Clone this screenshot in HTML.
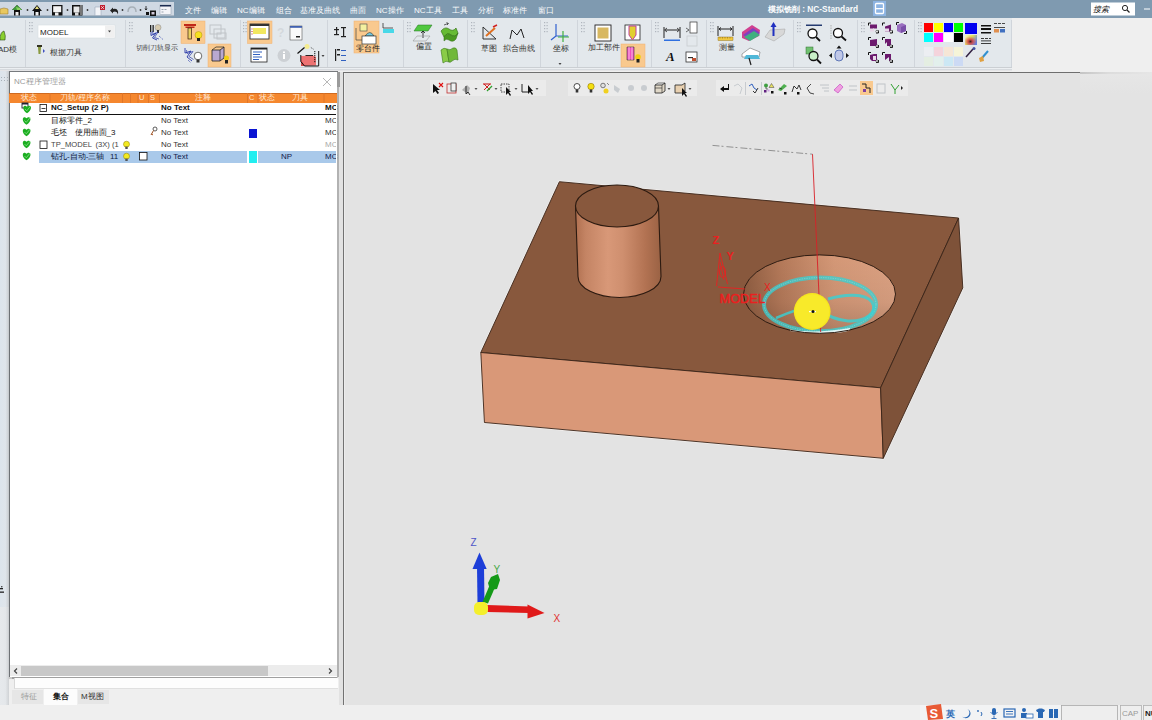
<!DOCTYPE html>
<html><head><meta charset="utf-8">
<style>
*{margin:0;padding:0;box-sizing:border-box}
html,body{width:1152px;height:720px;overflow:hidden;background:#efefef;font-family:"Liberation Sans",sans-serif;}
.a{position:absolute}
#title{left:0;top:0;width:1152px;height:18px;background:#7f9ab0}
#qat{left:0;top:2px;width:174px;height:14px;background:#cfd8e3;border-bottom:1px solid #a9b6c4}
.menu{top:4.8px;font-size:8px;color:#fbfcfd;line-height:12px;white-space:nowrap}
#ribbon{left:0;top:18px;width:1152px;height:49px;background:#e3e8ec}
.sep{top:20px;width:1px;height:46px;background:#d3d7dc}
.grip{width:4px;height:9px;background-image:radial-gradient(circle,#b4bac2 0.8px,transparent 1px);background-size:2.5px 3px}
#panel{left:8.5px;top:71px;width:329px;height:606px;background:#fff;border-left:1.5px solid #6d7175;border-top:1px solid #777a7e;box-shadow:0 1.5px 1px #a0a0a0}
#vp{left:343px;top:72px;width:809px;height:633px;background:#e3e3e3;border-left:1px solid #727272;border-top:1.5px solid #6e6e6e;box-shadow:inset 1px 0 0 #ececec}
#status{left:0;top:705px;width:1152px;height:15px;background:#efefef}
.t{position:absolute;font-size:8px;line-height:10px;white-space:nowrap;color:#222}
</style></head><body>
<!-- title bar -->
<div class="a" id="title"></div>
<div class="a" id="qat"></div>
<div class="a menu" style="left:185px">文件</div>
<div class="a menu" style="left:211px">编辑</div>
<div class="a menu" style="left:237px">NC编辑</div>
<div class="a menu" style="left:276px">组合</div>
<div class="a menu" style="left:300px">基准及曲线</div>
<div class="a menu" style="left:350px">曲面</div>
<div class="a menu" style="left:376px">NC操作</div>
<div class="a menu" style="left:414px">NC工具</div>
<div class="a menu" style="left:452px">工具</div>
<div class="a menu" style="left:478px">分析</div>
<div class="a menu" style="left:503px">标准件</div>
<div class="a menu" style="left:538px">窗口</div>
<div class="a menu" style="left:768px;top:3px;font-weight:bold;font-size:8.3px">模拟铣削 : NC-Standard</div>

<!-- ribbon -->
<div class="a" id="ribbon"></div>
<div class="a" style="left:0;top:67px;width:1152px;height:1px;background:#cbcfd3"></div><div class="a" style="left:0;top:68px;width:1152px;height:1px;background:#eceff2"></div><div class="a" style="left:0;top:69px;width:1152px;height:1px;background:#d6dade"></div><div class="a" style="left:0;top:70px;width:1152px;height:1px;background:#e4e4e6"></div><div class="a" style="left:1012px;top:18px;width:140px;height:53px;background:#efefef"></div>


<!-- ribbon svg -->
<svg class="a" style="left:0;top:0" width="1152" height="71" viewBox="0 0 1152 71" font-family="Liberation Sans">
<!-- QAT icons -->
<path d="M0,9 L4,8 L8,9 L8,14 L0,14Z" fill="#e8c860" stroke="#a08030" stroke-width="0.6"/>
<path d="M12,10 L17,5 L22,10 L20,10 L20,15.5 L14,15.5 L14,10Z" fill="#111"/>
<path d="M12,10 L17,5 L22,10Z" fill="#3d9a3a"/><path d="M16,7 L20,8 L21,10 L17,10Z" fill="#88d060"/>
<rect x="15.5" y="12" width="3" height="3.5" fill="#eee"/>
<path d="M32,11 L37,5 L42,11 L40,11 L40,15.5 L34,15.5 L34,11Z" fill="#111"/>
<path d="M35,9 L37,6 L39,9Z" fill="#e8e080"/>
<rect x="35.5" y="12" width="3" height="3.5" fill="#eee"/>
<rect x="52" y="5" width="10.5" height="10.5" fill="#111"/><rect x="53.2" y="6.2" width="8" height="6" fill="#f4f4f4"/><rect x="55" y="12.5" width="3.5" height="3" fill="#eee"/>
<rect x="72" y="5" width="10.5" height="10.5" fill="#111"/><rect x="73.5" y="6.5" width="6" height="6" fill="#e8e8e8"/><rect x="80.5" y="5" width="1" height="10" fill="#ddd"/><rect x="75" y="12.5" width="3.5" height="3" fill="#ddd"/>
<g fill="#333"><circle cx="27.5" cy="10" r="0.9"/><circle cx="47.5" cy="10" r="0.9"/><circle cx="67.5" cy="10" r="0.9"/><circle cx="87.5" cy="10" r="0.9"/><circle cx="122.5" cy="10" r="0.9"/><circle cx="140.5" cy="10" r="0.9"/></g>
<path d="M95,7 L101,7 L101,15.5 L95,15.5Z" fill="#f2f4f8" stroke="#9aa8b8" stroke-width="0.6"/>
<rect x="100" y="5" width="5" height="5" fill="#c02030"/><path d="M101,6 L104,9 M104,6 L101,9" stroke="#fff" stroke-width="0.6"/>
<path d="M110,10.5 L113,7.5 L113,9 Q119,8 118,14.5 Q117,10.5 113,12 L113,13.5Z" fill="#222"/>
<path d="M128,12 Q128,7 132,7 Q136,7 136,12" fill="none" stroke="#a8b0b8" stroke-width="1.5"/>
<path d="M146,6 L146,10 M145,8.5 L146,10 L147,8.5" stroke="#111" stroke-width="0.8" fill="none"/>
<rect x="146" y="12" width="3" height="3" fill="#111"/><rect x="150" y="10.5" width="6" height="5.5" fill="#111"/><rect x="151.5" y="12" width="3" height="2.5" fill="#cfc8d8"/>
<rect x="160" y="5" width="11" height="9.5" fill="#f4f4f8" stroke="#8a98a8" stroke-width="0.5"/><rect x="160" y="5" width="11" height="1.5" fill="#1a2a50"/>
<g fill="#9aa4b0"><rect x="161.5" y="9" width="2" height="1"/><rect x="164.5" y="9" width="2" height="1"/><rect x="161.5" y="11.5" width="2" height="1"/></g>

<!-- ribbon separators -->
<g fill="#d0d5db">
<rect x="25" y="20" width="1" height="47"/><rect x="125" y="20" width="1" height="47"/><rect x="240" y="20" width="1" height="47"/>
<rect x="327" y="20" width="1" height="47"/><rect x="403" y="20" width="1" height="47"/><rect x="467" y="20" width="1" height="47"/>
<rect x="540" y="20" width="1" height="47"/><rect x="577" y="20" width="1" height="47"/><rect x="651" y="20" width="1" height="47"/>
<rect x="706" y="20" width="1" height="47"/><rect x="793" y="20" width="1" height="47"/><rect x="857" y="20" width="1" height="47"/>
<rect x="914" y="20" width="1" height="47"/><rect x="1011" y="20" width="1" height="47"/>
</g>

<!-- grips -->
<g fill="#b0b6be">
<rect x="29" y="22" width="1.2" height="1.2"/><rect x="31.5" y="22" width="1.2" height="1.2"/><rect x="29" y="25" width="1.2" height="1.2"/><rect x="31.5" y="25" width="1.2" height="1.2"/><rect x="29" y="28" width="1.2" height="1.2"/><rect x="31.5" y="28" width="1.2" height="1.2"/><rect x="29" y="31" width="1.2" height="1.2"/><rect x="31.5" y="31" width="1.2" height="1.2"/><rect x="129" y="22" width="1.2" height="1.2"/><rect x="131.5" y="22" width="1.2" height="1.2"/><rect x="129" y="25" width="1.2" height="1.2"/><rect x="131.5" y="25" width="1.2" height="1.2"/><rect x="129" y="28" width="1.2" height="1.2"/><rect x="131.5" y="28" width="1.2" height="1.2"/><rect x="129" y="31" width="1.2" height="1.2"/><rect x="131.5" y="31" width="1.2" height="1.2"/><rect x="243" y="22" width="1.2" height="1.2"/><rect x="245.5" y="22" width="1.2" height="1.2"/><rect x="243" y="25" width="1.2" height="1.2"/><rect x="245.5" y="25" width="1.2" height="1.2"/><rect x="243" y="28" width="1.2" height="1.2"/><rect x="245.5" y="28" width="1.2" height="1.2"/><rect x="243" y="31" width="1.2" height="1.2"/><rect x="245.5" y="31" width="1.2" height="1.2"/><rect x="407" y="22" width="1.2" height="1.2"/><rect x="409.5" y="22" width="1.2" height="1.2"/><rect x="407" y="25" width="1.2" height="1.2"/><rect x="409.5" y="25" width="1.2" height="1.2"/><rect x="407" y="28" width="1.2" height="1.2"/><rect x="409.5" y="28" width="1.2" height="1.2"/><rect x="407" y="31" width="1.2" height="1.2"/><rect x="409.5" y="31" width="1.2" height="1.2"/><rect x="471" y="22" width="1.2" height="1.2"/><rect x="473.5" y="22" width="1.2" height="1.2"/><rect x="471" y="25" width="1.2" height="1.2"/><rect x="473.5" y="25" width="1.2" height="1.2"/><rect x="471" y="28" width="1.2" height="1.2"/><rect x="473.5" y="28" width="1.2" height="1.2"/><rect x="471" y="31" width="1.2" height="1.2"/><rect x="473.5" y="31" width="1.2" height="1.2"/><rect x="544" y="22" width="1.2" height="1.2"/><rect x="546.5" y="22" width="1.2" height="1.2"/><rect x="544" y="25" width="1.2" height="1.2"/><rect x="546.5" y="25" width="1.2" height="1.2"/><rect x="544" y="28" width="1.2" height="1.2"/><rect x="546.5" y="28" width="1.2" height="1.2"/><rect x="544" y="31" width="1.2" height="1.2"/><rect x="546.5" y="31" width="1.2" height="1.2"/><rect x="581" y="22" width="1.2" height="1.2"/><rect x="583.5" y="22" width="1.2" height="1.2"/><rect x="581" y="25" width="1.2" height="1.2"/><rect x="583.5" y="25" width="1.2" height="1.2"/><rect x="581" y="28" width="1.2" height="1.2"/><rect x="583.5" y="28" width="1.2" height="1.2"/><rect x="581" y="31" width="1.2" height="1.2"/><rect x="583.5" y="31" width="1.2" height="1.2"/><rect x="655" y="22" width="1.2" height="1.2"/><rect x="657.5" y="22" width="1.2" height="1.2"/><rect x="655" y="25" width="1.2" height="1.2"/><rect x="657.5" y="25" width="1.2" height="1.2"/><rect x="655" y="28" width="1.2" height="1.2"/><rect x="657.5" y="28" width="1.2" height="1.2"/><rect x="655" y="31" width="1.2" height="1.2"/><rect x="657.5" y="31" width="1.2" height="1.2"/><rect x="710" y="22" width="1.2" height="1.2"/><rect x="712.5" y="22" width="1.2" height="1.2"/><rect x="710" y="25" width="1.2" height="1.2"/><rect x="712.5" y="25" width="1.2" height="1.2"/><rect x="710" y="28" width="1.2" height="1.2"/><rect x="712.5" y="28" width="1.2" height="1.2"/><rect x="710" y="31" width="1.2" height="1.2"/><rect x="712.5" y="31" width="1.2" height="1.2"/><rect x="797" y="22" width="1.2" height="1.2"/><rect x="799.5" y="22" width="1.2" height="1.2"/><rect x="797" y="25" width="1.2" height="1.2"/><rect x="799.5" y="25" width="1.2" height="1.2"/><rect x="797" y="28" width="1.2" height="1.2"/><rect x="799.5" y="28" width="1.2" height="1.2"/><rect x="797" y="31" width="1.2" height="1.2"/><rect x="799.5" y="31" width="1.2" height="1.2"/><rect x="861" y="22" width="1.2" height="1.2"/><rect x="863.5" y="22" width="1.2" height="1.2"/><rect x="861" y="25" width="1.2" height="1.2"/><rect x="863.5" y="25" width="1.2" height="1.2"/><rect x="861" y="28" width="1.2" height="1.2"/><rect x="863.5" y="28" width="1.2" height="1.2"/><rect x="861" y="31" width="1.2" height="1.2"/><rect x="863.5" y="31" width="1.2" height="1.2"/><rect x="918" y="22" width="1.2" height="1.2"/><rect x="920.5" y="22" width="1.2" height="1.2"/><rect x="918" y="25" width="1.2" height="1.2"/><rect x="920.5" y="25" width="1.2" height="1.2"/><rect x="918" y="28" width="1.2" height="1.2"/><rect x="920.5" y="28" width="1.2" height="1.2"/><rect x="918" y="31" width="1.2" height="1.2"/><rect x="920.5" y="31" width="1.2" height="1.2"/>
</g>
<!-- orange highlight boxes -->
<g fill="#f9c98e" stroke="#f0b070" stroke-width="0.5">
<rect x="181" y="21" width="24" height="22.5"/>
<rect x="208" y="44" width="23" height="23"/>
<rect x="247.5" y="21" width="24.5" height="22.5"/>
<rect x="354" y="21" width="25" height="32"/>
<rect x="621" y="44" width="24" height="23"/>
</g>
<!-- group0 -->
<path d="M0,40 Q0,32 4,31 Q6,36 5,40Z" fill="#8ad030" stroke="#2a4a10" stroke-width="0.6"/>
<text x="-2" y="52" font-size="8" fill="#333">AD模</text>
<!-- group1 -->
<rect x="38" y="25" width="77" height="13" fill="#fff" stroke="#d8dce0" stroke-width="0.6"/>
<rect x="105" y="25.5" width="9.5" height="12" fill="#f0f0f0"/>
<path d="M108,30.5 L111,30.5 L109.5,32.5Z" fill="#444"/>
<text x="40" y="35" font-size="8" fill="#222">MODEL</text>
<rect x="37" y="45" width="5" height="2" fill="#332"/><path d="M38,47 L41,47 L40.5,54 L38.5,54Z" fill="#8a9a40"/><path d="M43,49 L45,51 L43,53Z" fill="#4050c0"/>
<text x="50" y="54.5" font-size="8" fill="#333">根据刀具</text>
<!-- group2 -->
<rect x="150" y="25" width="1.3" height="7" fill="#222"/><rect x="152.5" y="25" width="1.3" height="7" fill="#222"/>
<circle cx="158" cy="27.5" r="3" fill="#d8ccb0" stroke="#888" stroke-width="0.5"/><rect x="157" y="30" width="2" height="3" fill="#333"/>
<path d="M151,32 L151,35.5 L156,33 L152.5,38 L157,40" fill="none" stroke="#2838a8" stroke-width="0.9"/><path d="M152.5,31 L153,34.5 L158,32 L154.5,37.5 L159,39" fill="none" stroke="#2838a8" stroke-width="0.7"/><path d="M159,36 L163,39.5" stroke="#2838a8" stroke-width="0.8" stroke-dasharray="1,1"/>
<text x="135.5" y="49.5" font-size="7.3" fill="#444">切削刀轨显示</text>
<rect x="184" y="24" width="12" height="2" fill="#c02818"/><rect x="185.5" y="26.5" width="9" height="1.5" fill="#c02818"/><rect x="188" y="28" width="3.5" height="11" fill="#e8d060" stroke="#3a1a10" stroke-width="0.7"/>
<circle cx="198.5" cy="35" r="3.5" fill="#f5e020" stroke="#a08000" stroke-width="0.4"/><rect x="197" y="38" width="3" height="3" fill="#222"/>
<g fill="none" stroke="#c0c4c8" stroke-width="1"><rect x="210" y="25" width="11" height="9"/><rect x="214" y="29" width="11" height="9"/><rect x="217" y="33" width="9" height="6"/></g>
<path d="M185,48 L185,53 L191,51 L187,57 L192,61" fill="none" stroke="#2838a8" stroke-width="0.9"/><path d="M186.5,50 L187,53.5 L193,51.5 L189,56.5 L193.5,59.5" fill="none" stroke="#2838a8" stroke-width="0.7"/><path d="M188,60 L191,63" stroke="#2838a8" stroke-width="0.8" stroke-dasharray="1,1"/>
<circle cx="198" cy="56" r="3.8" fill="#fff" stroke="#333" stroke-width="0.7"/><rect x="196.5" y="59.5" width="3" height="3" fill="#333"/>
<path d="M212,50 L220,50 L224,47 L224,58 L220,61 L212,61Z" fill="#b8a8d0" stroke="#222" stroke-width="0.8"/><path d="M212,50 L216,47 L224,47 M220,50 L220,61" fill="none" stroke="#222" stroke-width="0.7"/>
<circle cx="226.5" cy="58" r="2.5" fill="#f0d010"/><rect x="225" y="60" width="3" height="3.5" fill="#222"/>
<!-- group3 -->
<rect x="250" y="24" width="19" height="15" fill="#fff" stroke="#333" stroke-width="0.9"/><rect x="250" y="24" width="19" height="2" fill="#333"/>
<rect x="253" y="28" width="13" height="6" fill="#f2e860"/><g fill="#c02020"><rect x="251.5" y="28.5" width="1" height="1"/><rect x="251.5" y="31" width="1" height="1"/><rect x="251.5" y="33.5" width="1" height="1"/></g>
<text x="277" y="37" font-size="12" fill="#d4d8dc" font-weight="bold">?</text>
<rect x="290" y="26" width="12" height="14" fill="#fafafa" stroke="#3a3a3a" stroke-width="0.5"/><rect x="290" y="26" width="12" height="1.8" fill="#4060b0"/><rect x="296" y="36" width="4" height="1.5" fill="#222"/>
<rect x="251" y="48" width="16" height="14" fill="#fff" stroke="#222" stroke-width="0.8"/><rect x="251" y="48" width="16" height="1.5" fill="#222"/>
<g fill="#3060c0"><rect x="253" y="51.5" width="9" height="1"/><rect x="253" y="54" width="7" height="1"/><rect x="253" y="56.5" width="9" height="1"/><rect x="253" y="59" width="6" height="1"/></g>
<circle cx="284" cy="55.5" r="6.5" fill="#ccd0d4"/><rect x="283" y="54" width="2" height="5" fill="#fff"/><rect x="283" y="51.5" width="2" height="1.5" fill="#fff"/>
<circle cx="307" cy="46.5" r="2.5" fill="#f4ec90"/>
<path d="M297.5,53.5 L304.5,47.5" stroke="#111" stroke-width="1.2"/>
<path d="M301,56 L313,55.5 L316,57 L316,65.5 L304.5,66 L301,62Z" fill="#ec7272"/><path d="M301,60 L305,66 L301,66Z" fill="#d84848"/>
<path d="M300.8,55 L300.8,61.5 L304.5,66 L318.7,66 L318.7,51" fill="none" stroke="#111" stroke-width="1"/>
<path d="M305.5,55.5 L313,55.5" stroke="#111" stroke-width="0.9"/>
<path d="M314.8,51 L314.8,63" stroke="#111" stroke-width="1" stroke-dasharray="1.2,0.8"/>
<path d="M313.5,49.2 L310,47" stroke="#333" stroke-width="0.8" stroke-dasharray="1,1"/>
<path d="M321.5,55 L324.5,55 L323,57Z" fill="#444"/>
<!-- group4 -->
<g fill="#222"><rect x="334" y="29" width="5" height="1.2"/><rect x="336" y="27" width="1.2" height="8"/><rect x="341" y="27" width="5" height="1.2"/><rect x="343" y="27" width="1.2" height="10"/><rect x="341" y="36" width="5" height="1.2"/><rect x="334" y="34" width="5" height="1.2"/></g>
<g fill="#222"><rect x="335" y="49" width="1.2" height="12"/><rect x="337" y="49" width="3" height="1.5"/><rect x="337" y="54" width="3" height="1.5"/></g><g fill="#3060c0"><rect x="341" y="50" width="5" height="1"/><rect x="341" y="55" width="5" height="1"/><rect x="341" y="60" width="5" height="1"/></g>
<rect x="360" y="24" width="7" height="7" fill="#f4f0a0" stroke="#444" stroke-width="0.6"/><path d="M356,28 L356,40 L367,40" fill="none" stroke="#444" stroke-width="0.7"/>
<path d="M365,36 Q370,29 374,36Z" fill="#70c8e0" stroke="#333" stroke-width="0.6"/><rect x="362" y="36" width="14" height="8" fill="#fff" stroke="#333" stroke-width="0.7"/>
<text x="356" y="51" font-size="8" fill="#222">零台件</text>
<path d="M383,23 L383,28 L393,28" fill="none" stroke="#333" stroke-width="0.8"/><rect x="383" y="29" width="11" height="4" fill="#48d8e8"/>
<!-- group5 -->
<path d="M418,25 L432,25 L428,31 L414,31Z" fill="#50c840" stroke="#207020" stroke-width="0.5"/><path d="M423,31 L423,38 M421,33 L423,31 L425,33" stroke="#111" stroke-width="0.8" fill="none"/>
<path d="M417,36 L430,36 L426,41 L413,41Z" fill="none" stroke="#999" stroke-width="0.6"/>
<text x="416" y="49" font-size="8" fill="#333">偏置</text>
<path d="M441,31 Q445,26 449,29 Q453,32 456,28 L458,33 Q455,38 451,35 Q447,32 444,37Z" fill="#66bb33" stroke="#2e6a10" stroke-width="0.6"/>
<path d="M444,37 Q447,32 451,35 Q455,38 458,33 L456,39 Q453,43 449,40 Q446,38 444,41Z" fill="#4a9a20" stroke="#2e6a10" stroke-width="0.5"/>
<path d="M444,25 L448,23.5 M446.5,22.5 L448.5,23.5 L447,25" fill="none" stroke="#222" stroke-width="0.7"/>
<path d="M441,50 Q444,47 447,49 L449,62 Q446,60 443,63Z" fill="#8acc48" stroke="#3a7a18" stroke-width="0.6"/>
<path d="M447,49 Q450,51 453,48 Q456,47 457,50 L458,60 Q455,58 452,61 Q450,63 449,62Z" fill="#70b838" stroke="#3a7a18" stroke-width="0.6"/>
<!-- group6 -->
<path d="M483,27 L483,39 L496,39Z" fill="none" stroke="#222" stroke-width="0.9"/><path d="M486,36 L495,28" stroke="#e07020" stroke-width="2"/><path d="M493,27 L497,25" stroke="#d02020" stroke-width="1.5"/>
<text x="481" y="51" font-size="8" fill="#333">草图</text>
<path d="M510,39 L512,30 L517,35 L521,29 L524,38" fill="none" stroke="#222" stroke-width="1"/>
<text x="503" y="51" font-size="8" fill="#333">拟合曲线</text>
<!-- group7 -->
<path d="M556,24 L556,36 L568,36 M556,36 L551,40" fill="none" stroke="#3060d0" stroke-width="1.2"/><path d="M558,37 L569,37 M563,31 L563,42" stroke="#40b040" stroke-width="1.2"/>
<text x="553" y="51" font-size="8" fill="#333">坐标</text>
<path d="M558.5,63 L561.5,63 L560,65Z" fill="#444"/>
<!-- group8 -->
<rect x="595" y="25" width="16" height="16" fill="#fff" stroke="#222" stroke-width="0.9"/><rect x="597.5" y="27.5" width="11" height="11" fill="#d8b860"/>
<text x="588" y="50" font-size="8" fill="#333">加工部件</text>
<rect x="625" y="25" width="15" height="15" fill="#fff" stroke="#222" stroke-width="0.8"/><path d="M629,26 L636,26 L636,35 L632.5,40 L629,35Z" fill="#e0d030" stroke="#c040a0" stroke-width="1"/>
<path d="M627,47 L634,47 L634,60 L627,60Z" fill="#f050c0" stroke="#333" stroke-width="0.6"/><path d="M629,47 L629,60 M632,47 L632,60" stroke="#fff" stroke-width="0.6"/>
<circle cx="638" cy="57" r="2.8" fill="#f0d010"/><rect x="636.5" y="59" width="3" height="3.5" fill="#222"/>
<!-- group9 -->
<path d="M664,27 L664,38 M680,27 L680,38 M665,30 L679,30" fill="none" stroke="#222" stroke-width="1"/><path d="M667,28 L664.5,30 L667,32 M677,28 L679.5,30 L677,32" fill="none" stroke="#222" stroke-width="0.8"/>
<rect x="664" y="39.5" width="16" height="1.5" fill="#3070e0"/>
<rect x="690" y="22" width="7" height="11" fill="#fff" stroke="#333" stroke-width="0.7"/><path d="M686,28 L689,30 L686,32" fill="none" stroke="#333" stroke-width="0.7"/>
<rect x="687" y="36" width="10" height="10" fill="none" stroke="#c8ccd0" stroke-width="0.8"/>
<text x="666" y="61" font-size="13" font-style="italic" font-weight="bold" font-family="Liberation Serif" fill="#111">A</text>
<rect x="686" y="52" width="11" height="10" fill="#fff" stroke="#333" stroke-width="0.8"/><rect x="688" y="57" width="5" height="1.2" fill="#333"/><rect x="692" y="58" width="4" height="3" fill="#c05030"/>
<!-- group10 -->
<path d="M718,26 L718,36 M733,26 L733,36 M719,29 L732,29 M721,27.5 L719,29 L721,30.5 M730,27.5 L732,29 L730,30.5" fill="none" stroke="#222" stroke-width="1"/>
<rect x="718" y="37" width="15" height="3.5" fill="#f0c840" stroke="#806010" stroke-width="0.4"/><path d="M720,37 L720,38.5 M722.5,37 L722.5,38.5 M725,37 L725,38.5 M727.5,37 L727.5,38.5 M730,37 L730,38.5" stroke="#806010" stroke-width="0.5"/>
<text x="719" y="50" font-size="8" fill="#333">测量</text>
<path d="M742,32 L752,25 L760,30 L759,36 L749,41 L742,38Z" fill="#d04090"/><path d="M743,35 L753,28 L760,33 L750,39Z" fill="#8040c0"/><path d="M744,37 L754,31 L760,35 L750,41Z" fill="#40b080"/>
<path d="M765,37 L770,30 L785,29 L784,34 L774,41Z" fill="#d8d8d8" stroke="#a0a0a0" stroke-width="0.5"/><rect x="772.5" y="26" width="2" height="10" fill="#2030c0"/><path d="M770.5,27 L773.5,22 L776.5,27Z" fill="#2030c0"/>
<path d="M742,54 L750,48 L760,52 L759,57 L742,57Z" fill="#fff" stroke="#555" stroke-width="0.5"/><path d="M746,55 L758,55 L760,59 L744,59Z" fill="#50b8d8"/><path d="M749,58 L751,65" stroke="#222" stroke-width="1.2"/>
<!-- group11 -->
<rect x="806" y="24.5" width="16" height="1.5" fill="#243a70"/><circle cx="812.5" cy="33.5" r="4.5" fill="#fff" stroke="#111" stroke-width="1.3"/><path d="M816,37 L820,41" stroke="#111" stroke-width="1.8"/>
<path d="M831,25 L831,40" stroke="#888" stroke-width="0.6" stroke-dasharray="1.5,1"/><circle cx="838" cy="33" r="4.5" fill="#fff" stroke="#111" stroke-width="1.3"/><path d="M841.5,36.5 L846,40.5" stroke="#111" stroke-width="1.8"/>
<rect x="806" y="47" width="7" height="7" fill="#70c070" stroke="#307030" stroke-width="0.5"/><circle cx="813.5" cy="56" r="4.5" fill="#c8f0c8" stroke="#111" stroke-width="1.3"/><path d="M817,59.5 L821,63.5" stroke="#111" stroke-width="1.8"/>
<rect x="835" y="50" width="8" height="11" rx="4" fill="#c0c8e8" stroke="#3050a0" stroke-width="0.7"/><path d="M839,45.5 L841.5,48.5 L836.5,48.5Z M829,55.5 L832,53 L832,58Z M849,55.5 L846,53 L846,58Z" fill="#111"/>
<!-- group12 -->
<g transform="translate(868,22.5)"><path d="M2,2 L9,2 L9,6 L5,6 L5,8 L2,8Z" fill="#6c1a6e"/><path d="M2,6 L6,6 L6,9 L2,9Z" fill="#e8d8e8"/><path d="M0.5,3 L0.5,0.5 L3,0.5 M8,10.5 L10.5,10.5 L10.5,8" fill="none" stroke="#111" stroke-width="1"/><circle cx="9" cy="9" r="1.2" fill="#fff" stroke="#111" stroke-width="0.5"/></g><g transform="translate(882,22.5)"><path d="M3,4 L9,2 L9,9 L3,9Z" fill="#6c1a6e"/><path d="M3,6 L7,6 L7,9 L3,9Z" fill="#e8d8e8"/><path d="M0.5,3 L0.5,0.5 L3,0.5 M8,10.5 L10.5,10.5 L10.5,8" fill="none" stroke="#111" stroke-width="1"/><circle cx="9" cy="9" r="1.2" fill="#fff" stroke="#111" stroke-width="0.5"/></g><g transform="translate(868,37)"><path d="M2,3 L9,2 L9,9 L2,9Z" fill="#6c1a6e"/><path d="M0.5,3 L0.5,0.5 L3,0.5 M8,10.5 L10.5,10.5 L10.5,8" fill="none" stroke="#111" stroke-width="1"/><circle cx="9" cy="9" r="1.2" fill="#fff" stroke="#111" stroke-width="0.5"/></g><g transform="translate(882,37)"><path d="M3,2 L9,2 L9,9 L5,9 L5,5 L3,7Z" fill="#6c1a6e"/><path d="M0.5,3 L0.5,0.5 L3,0.5 M8,10.5 L10.5,10.5 L10.5,8" fill="none" stroke="#111" stroke-width="1"/><circle cx="9" cy="9" r="1.2" fill="#fff" stroke="#111" stroke-width="0.5"/></g><g transform="translate(868,52)"><path d="M2,3 L6,2 L9,2 L9,9 L4,9 L2,7Z" fill="#6c1a6e"/><path d="M5,4 L8,4 L8,8 L5,8Z" fill="#e8d8e8"/><path d="M0.5,3 L0.5,0.5 L3,0.5 M8,10.5 L10.5,10.5 L10.5,8" fill="none" stroke="#111" stroke-width="1"/><circle cx="9" cy="9" r="1.2" fill="#fff" stroke="#111" stroke-width="0.5"/></g><g transform="translate(882,52)"><path d="M3,2 L9,2 L9,9 L7,9 L7,5 L3,8Z" fill="#6c1a6e"/><path d="M0.5,3 L0.5,0.5 L3,0.5 M8,10.5 L10.5,10.5 L10.5,8" fill="none" stroke="#111" stroke-width="1"/><circle cx="9" cy="9" r="1.2" fill="#fff" stroke="#111" stroke-width="0.5"/></g><path d="M897,25 L902,23 L906,25 L906,31 L901,33 L897,31Z" fill="#9a70c0"/><path d="M901,27 L906,25 L906,31 L901,33Z" fill="#7a50a8"/><path d="M896.5,25 L896.5,22.5 L899,22.5 M904,33.5 L906.5,33.5 L906.5,31" fill="none" stroke="#111" stroke-width="1"/><rect x="924" y="23" width="9" height="9" fill="#ff0000"/><rect x="934" y="23" width="9" height="9" fill="#ffff00"/><rect x="944" y="23" width="9" height="9" fill="#0000ff"/><rect x="954" y="23" width="9" height="9" fill="#00ff00"/><rect x="924" y="33" width="9" height="9" fill="#00ffff"/><rect x="934" y="33" width="9" height="9" fill="#ff00ff"/><rect x="944" y="33" width="9" height="9" fill="#ffffff"/><rect x="954" y="33" width="9" height="9" fill="#000000"/><rect x="924" y="47" width="9" height="9" fill="#eceef2"/><rect x="934" y="47" width="9" height="9" fill="#f4d4dc"/><rect x="944" y="47" width="9" height="9" fill="#f6e6d6"/><rect x="954" y="47" width="9" height="9" fill="#f6f4d8"/><rect x="924" y="57" width="9" height="9" fill="#e4eee2"/><rect x="934" y="57" width="9" height="9" fill="#e2f0ec"/><rect x="944" y="57" width="9" height="9" fill="#cce8f4"/><rect x="954" y="57" width="9" height="9" fill="#ccdaf4"/>
<rect x="965" y="23" width="12" height="11" fill="#0000f0"/>
<defs><linearGradient id="cw1" x1="0" y1="0" x2="1" y2="0.6"><stop offset="0" stop-color="#f8f8c0"/><stop offset="0.5" stop-color="#e0e060"/><stop offset="1" stop-color="#6080e0"/></linearGradient><radialGradient id="cw2" cx="0.45" cy="0.65" r="0.55"><stop offset="0" stop-color="#302020"/><stop offset="0.35" stop-color="#d03040" stop-opacity="0.8"/><stop offset="1" stop-color="#e05060" stop-opacity="0"/></radialGradient></defs><rect x="965" y="35" width="12" height="10" fill="url(#cw1)"/><rect x="965" y="35" width="12" height="10" fill="url(#cw2)"/>
<rect x="981" y="25" width="10" height="1.5" fill="#111"/><rect x="981" y="28" width="10" height="2" fill="#111"/><rect x="981" y="32" width="10" height="1.5" fill="#111"/>
<g fill="#111"><rect x="981" y="38" width="3" height="0.8"/><rect x="985" y="38" width="3" height="0.8"/><rect x="989" y="38" width="2" height="0.8"/><rect x="981" y="40.5" width="10" height="0.8"/><rect x="981" y="43" width="10" height="0.8"/></g>
<g fill="#222"><rect x="994" y="23" width="3" height="0.8"/><rect x="998" y="23" width="3" height="0.8"/><rect x="1002" y="23" width="3" height="0.8"/><rect x="994" y="27" width="11" height="0.8"/></g>
<rect x="994" y="29" width="5" height="3.5" fill="#e09050"/><rect x="1000" y="29" width="5" height="3.5" fill="#4070c0"/>
<path d="M966,57 L973,49" stroke="#302040" stroke-width="1.5"/><circle cx="974" cy="48.5" r="1.5" fill="#4050a0"/>
<path d="M982,58 L988,51" stroke="#3090d0" stroke-width="2"/><path d="M979,58 L983,56 L984,61 L980,62Z" fill="#e0a040"/>
</svg>

<!-- left panel -->
<div class="a" style="left:0;top:71px;width:9px;height:536px;background:linear-gradient(90deg,#dce4ec,#dfe5eb 60%,#c8ccd0)"></div><div class="a" style="left:0;top:607px;width:9px;height:98px;background:linear-gradient(90deg,#e6e9ec,#e4e7ea 60%,#cfd2d5)"></div><svg class="a" style="left:0;top:586px" width="6" height="10"><rect x="0" y="2" width="3" height="1.3" fill="#222"/><rect x="0" y="5.5" width="4" height="1.3" fill="#222"/><circle cx="1.8" cy="0.8" r="0.7" fill="#222"/></svg>
<div class="a" id="panel"></div>


<!-- panel content -->
<div class="a" style="left:0;top:76px;width:9px;height:7px;background-image:radial-gradient(circle,#a8b0b8 0.7px,transparent 0.9px);background-size:3px 3px"></div>
<div class="t" style="left:14px;top:76.5px;color:#9a9a9a;font-size:8px">NC程序管理器</div>
<svg class="a" style="left:322px;top:77px" width="10" height="10"><path d="M1,1 L9,9 M9,1 L1,9" stroke="#b0b0b0" stroke-width="0.9"/></svg>
<div class="a" style="left:336.7px;top:72px;width:2.6px;height:605px;background:#b2b2b2"></div><div class="a" style="left:339.3px;top:72px;width:3.7px;height:633px;background:#e2e2e2"></div>
<div class="a" style="left:337px;top:72px;width:2.5px;height:15px;background:#9a9a9a"></div>
<!-- header -->
<div class="a" style="left:9px;top:92.5px;width:328px;height:10px;background:#f5872e;border-top:1px solid #d06a20"></div>
<svg class="a" style="left:0;top:92px" width="340" height="12">
<g fill="#e07628"><rect x="49.5" y="1" width="1" height="10"/><rect x="122" y="1" width="1" height="10"/><rect x="130" y="1" width="1" height="10"/><rect x="137.5" y="1" width="1" height="10"/><rect x="148" y="1" width="1" height="10"/><rect x="159" y="1" width="1" height="10"/><rect x="247" y="1" width="1" height="10"/><rect x="257.5" y="1" width="1" height="10"/><rect x="323.5" y="1" width="1" height="10"/></g>
</svg>
<div class="t" style="left:21px;top:92.5px;color:#fde8d4;font-size:7.5px">状态</div>
<div class="t" style="left:60px;top:92.5px;color:#fde8d4;font-size:7.5px">刀轨/程序名称</div>
<div class="t" style="left:139px;top:92.5px;color:#fde8d4;font-size:7.5px">U</div>
<div class="t" style="left:150px;top:92.5px;color:#fde8d4;font-size:7.5px">S</div>
<div class="t" style="left:195px;top:92.5px;color:#fde8d4;font-size:7.5px">注释</div>
<div class="t" style="left:249px;top:92.5px;color:#fde8d4;font-size:7.5px">C</div>
<div class="t" style="left:259px;top:92.5px;color:#fde8d4;font-size:7.5px">状态</div>
<div class="t" style="left:292px;top:92.5px;color:#fde8d4;font-size:7.5px">刀具</div>
<!-- row5 highlight -->
<div class="a" style="left:39px;top:151px;width:208px;height:11.5px;background:#a9c9ea"></div>
<div class="a" style="left:258px;top:151px;width:78px;height:11.5px;background:#a9c9ea"></div>
<div class="a" style="left:248.5px;top:151px;width:8.5px;height:11.5px;background:#22eef0"></div>
<div class="a" style="left:248.5px;top:129px;width:8.5px;height:9px;background:#0a14d2"></div>
<div class="a" style="left:39px;top:114px;width:297px;height:1.3px;background:#111"></div>
<svg class="a" style="left:0;top:100px" width="340" height="70">
<defs><g id="chk"><path d="M0.3,2.5 Q0.5,0.3 2.5,0.8 L4,1.8 L5.5,0.8 Q7.8,0.3 8,2.5 Q8,5.5 4,8.3 Q0,5.5 0.3,2.5Z" fill="#1cae22"/><path d="M2,4 L3.8,5.8 L7.5,1.2" fill="none" stroke="#7ad87a" stroke-width="0.9"/></g>
<g id="bulb"><circle cx="3.5" cy="3.2" r="3" fill="#f3ea20" stroke="#8a7a00" stroke-width="0.5"/><rect x="2.3" y="5.5" width="2.4" height="2.5" fill="#555"/></g></defs>
<rect x="22" y="3" width="6" height="5" fill="#fff" stroke="#223" stroke-width="0.9"/><rect x="22" y="3" width="6" height="1.5" fill="#223"/>
<use href="#chk" x="23" y="5" transform=""/>
<use href="#chk" x="22.5" y="16.5"/><use href="#chk" x="22.5" y="28"/><use href="#chk" x="22.5" y="40"/><use href="#chk" x="22.5" y="52"/>
<rect x="40" y="4.5" width="6.5" height="7" fill="none" stroke="#111" stroke-width="0.8"/><rect x="41.5" y="8" width="4" height="0.8" fill="#111"/>
<rect x="40" y="41" width="7" height="7.5" fill="#fff" stroke="#111" stroke-width="0.8"/>
<use href="#bulb" x="123" y="41"/><use href="#bulb" x="123" y="53"/>
<rect x="139.5" y="52.5" width="7.5" height="7.5" fill="#fff" stroke="#111" stroke-width="0.8"/>
<circle cx="155" cy="29" r="2" fill="none" stroke="#333" stroke-width="0.8"/><path d="M153.5,30.5 L151,35 M151.5,34 L153,35" stroke="#a05020" stroke-width="1"/>
</svg>
<div class="t" style="left:51px;top:103px;font-weight:bold;color:#111">NC_Setup (2 P)</div>
<div class="t" style="left:161px;top:103px;font-weight:bold;color:#111">No Text</div>
<div class="t" style="left:325px;top:103px;font-weight:bold;color:#111">MC</div>
<div class="t" style="left:51px;top:115.5px;color:#111">目标零件_2</div>
<div class="t" style="left:161px;top:115.5px;color:#333">No Text</div>
<div class="t" style="left:325px;top:115.5px;color:#333">MC</div>
<div class="t" style="left:51px;top:127.5px;color:#111">毛坯</div><div class="t" style="left:74.5px;top:127.5px;color:#111">使用曲面_3</div>
<div class="t" style="left:161px;top:127.5px;color:#333">No Text</div>
<div class="t" style="left:325px;top:127.5px;color:#333">MC</div>
<div class="t" style="left:51px;top:139.5px;color:#444;font-size:7.6px">TP_MODEL</div><div class="t" style="left:95.5px;top:139.5px;color:#444;font-size:7.6px">(3X) (1</div>
<div class="t" style="left:161px;top:139.5px;color:#333">No Text</div>
<div class="t" style="left:325px;top:139.5px;color:#aaa">MC</div>
<div class="t" style="left:51px;top:151.5px;color:#101a40">钻孔-自动-三轴</div><div class="t" style="left:110px;top:151.5px;color:#101a40">11</div>
<div class="t" style="left:161px;top:151.5px;color:#14204a">No Text</div>
<div class="t" style="left:281px;top:151.5px;color:#14204a">NP</div>
<div class="t" style="left:325px;top:151.5px;color:#14204a">MC</div>
<div class="a" style="left:336px;top:103px;width:1px;height:60px;background:#fff"></div>
<!-- scrollbar -->
<div class="a" style="left:10px;top:665px;width:327px;height:11px;background:#ececec"></div>
<div class="a" style="left:21px;top:665.5px;width:247px;height:10px;background:#c8c8c8"></div>
<svg class="a" style="left:12px;top:667px" width="8" height="8"><path d="M5,1.5 L2.5,4 L5,6.5" fill="none" stroke="#444" stroke-width="1.2"/></svg>
<svg class="a" style="left:326px;top:667px" width="8" height="8"><path d="M3,1.5 L5.5,4 L3,6.5" fill="none" stroke="#444" stroke-width="1.2"/></svg>
<div class="a" style="left:14px;top:678px;width:324px;height:11px;background:#fdfdfd;border-left:1px solid #d8d8d8;border-bottom:1px solid #e0e0e0"></div>
<!-- tabs -->
<div class="a" style="left:12px;top:689.5px;width:31px;height:14.5px;background:#e6e6e6"></div>
<div class="a" style="left:44px;top:689px;width:33px;height:16px;background:#fcfcfc"></div>
<div class="a" style="left:78px;top:689.5px;width:31px;height:14.5px;background:#e6e6e6"></div>
<div class="t" style="left:21px;top:691.5px;color:#999">特征</div>
<div class="t" style="left:53px;top:691.5px;color:#111;font-weight:bold">集合</div>
<div class="t" style="left:81px;top:691.5px;color:#333">M视图</div>

<!-- viewport -->
<div class="a" id="vp"></div>
<div class="a" style="left:1080px;top:71.5px;width:72px;height:2px;background:linear-gradient(90deg,#c4c4c4,#dcdcdc 40%,#e6e6e6)"></div><div class="a" style="left:1080px;top:73.5px;width:72px;height:20px;background:linear-gradient(180deg,#e6e6e6,#e3e3e3)"></div>



<!-- viewport toolbar -->
<svg class="a" style="left:0;top:0" width="1152" height="100" viewBox="0 0 1152 100" font-family="Liberation Sans">
<rect x="430" y="80" width="116" height="16" fill="#ebebeb"/>
<rect x="568" y="80" width="129" height="16" fill="#ebebeb"/>
<rect x="716" y="80" width="192" height="16" fill="#ebebeb"/>
<!-- g1 -->
<path d="M433,84 L433,93 L435.5,91 L437.5,94 L439,93 L437,90 L440,90Z" fill="#111"/><path d="M439,83 L443,87 M443,83 L439,87" stroke="#e01010" stroke-width="1.1"/>
<rect x="447" y="84" width="9" height="9" fill="none" stroke="#c03030" stroke-width="0.8"/><rect x="451" y="83" width="5" height="8" fill="#f0f0f0" stroke="#222" stroke-width="0.7"/>
<path d="M462,90 L467,85 L470,88 L468,94Z" fill="#b0b0b0"/><path d="M466,86 L466,94 L468,92 L470,95" fill="none" stroke="#222" stroke-width="0.9"/>
<path d="M483,84 L491,84" stroke="#d02020" stroke-width="1.1"/><path d="M484,84 L490,90 M490,84 L484,90" stroke="#d02020" stroke-width="1"/><path d="M487,91 L492,86" stroke="#30a030" stroke-width="1.2"/>
<rect x="501" y="84" width="8" height="8" fill="none" stroke="#222" stroke-width="0.8" stroke-dasharray="1.5,1"/><path d="M506,87 L506,95 L508,93 L510,96 L511,95 L509,92 L511,92Z" fill="#111"/>
<path d="M522,84 L522,92 L528,92" fill="none" stroke="#222" stroke-width="1"/><path d="M528,85 L528,94 L530,92 L532,95 L533,94 L531,91 L533,91Z" fill="#111"/>
<g fill="#555"><path d="M474.5,88 L477.5,88 L476,90Z"/><path d="M494.5,88 L497.5,88 L496,90Z"/><path d="M514.5,88 L517.5,88 L516,90Z"/><path d="M535.5,88 L538.5,88 L537,90Z"/></g>
<!-- g2 -->
<circle cx="577" cy="86.5" r="3" fill="#fff" stroke="#222" stroke-width="0.8"/><rect x="575.7" y="89.5" width="2.6" height="3" fill="#333"/>
<circle cx="591" cy="86.5" r="3.2" fill="#f5e010" stroke="#806000" stroke-width="0.5"/><rect x="589.7" y="89.5" width="2.6" height="3" fill="#333"/>
<circle cx="603" cy="85.5" r="2.3" fill="#e0e0e0" stroke="#333" stroke-width="0.6"/><circle cx="606" cy="91" r="2.5" fill="#f0d020"/><path d="M607,83 L609,85" stroke="#444" stroke-width="0.6"/>
<g fill="#c8ccd0"><path d="M614,85 L620,89 L618,93 L614,90Z"/><circle cx="631" cy="88" r="3"/><circle cx="644" cy="88" r="3"/></g>
<path d="M655,85 L662,85 L665,83 L665,91 L662,93 L655,93Z" fill="#e0d8c8" stroke="#222" stroke-width="0.8"/><path d="M655,85 L658,83 L665,83 M662,85 L662,93 M655,88 L662,88" fill="none" stroke="#222" stroke-width="0.6"/>
<path d="M675,85 L682,85 L685,83 L685,91 L682,93 L675,93Z" fill="#e8d0b0" stroke="#222" stroke-width="0.8"/><path d="M682,88 L682,96 L684,94 L686,97 L687,96 L685,93 L687,93Z" fill="#111"/>
<g fill="#555"><path d="M667.5,88 L670.5,88 L669,90Z"/><path d="M688.5,88 L691.5,88 L690,90Z"/></g>
<!-- g3 -->
<path d="M720,89 L724,86 L724,88 L728,88 L728,84 L729,84 L729,90 L724,90 L724,92Z" fill="#111"/>
<path d="M734,86 L738,84 L742,88 L740,94" fill="none" stroke="#c8ccd0" stroke-width="1"/>
<rect x="745" y="82" width="0.8" height="13" fill="#c0c4c8"/>
<path d="M749,86 L752,84 L754,88 L757,90" fill="none" stroke="#3060c0" stroke-width="1"/><path d="M753,91 L755,93 L758,88" fill="none" stroke="#222" stroke-width="0.9"/>
<rect x="761" y="82" width="0.8" height="13" fill="#c0c4c8"/>
<circle cx="766" cy="85.5" r="2" fill="#40a040"/><path d="M769,87.5 L771.5,83.5 L774,87.5Z" fill="#e8e060" stroke="#444" stroke-width="0.5"/><path d="M765,88 L767,88 L767,90" stroke="#222" stroke-width="0.6" fill="none"/><rect x="764" y="90" width="2.5" height="2.5" fill="#602080"/><rect x="771" y="91" width="2.5" height="2.5" fill="#111"/><rect x="767.5" y="89.5" width="2" height="2" fill="#c080e0" opacity="0.7"/>
<path d="M778,90 L784,84 L787,86 L781,91Z" fill="#50b050"/><path d="M779,88 L782,89" stroke="#222" stroke-width="0.7"/><rect x="784" y="92" width="2.5" height="2.5" fill="#111"/>
<path d="M792,92 L794,86 L797,89 L799,85 L801,90" fill="none" stroke="#222" stroke-width="0.9"/><rect x="797" y="92" width="2.5" height="2.5" fill="#111"/>
<path d="M807,88 L811,84 M807,88 L810,93 L814,94" fill="none" stroke="#333" stroke-width="0.9"/>
<path d="M820,85 L829,85 M822,88 L829,88 M824,91 L829,91" stroke="#c0c4c8" stroke-width="1"/>
<path d="M834,90 L840,84 L843,87 L838,93Z" fill="#f0a0e0" stroke="#c040c0" stroke-width="0.6"/>
<path d="M849,86 L857,86 M849,90 L857,90" stroke="#c0c4c8" stroke-width="1.2"/>
<rect x="860" y="81" width="13" height="14" fill="#f9c98e"/><path d="M862,84 L866,84 L866,88 L870,88 L870,93" fill="none" stroke="#222" stroke-width="1"/><rect x="863" y="89" width="3" height="3" fill="#8040a0"/>
<rect x="877" y="84" width="8" height="9" fill="none" stroke="#c0c4c8" stroke-width="1"/>
<path d="M891,84 L895,90 L899,85 M895,90 L895,94" fill="none" stroke="#30a030" stroke-width="1"/><path d="M901,86 L903,88 L901,90Z" fill="#222"/>
</svg>
<!-- title bar right items -->
<svg class="a" style="left:0;top:0" width="1152" height="18">
<rect x="873" y="1" width="13" height="15" fill="#8db4e2"/><rect x="875.5" y="3.5" width="8" height="10" rx="1" fill="none" stroke="#fff" stroke-width="1.3"/><rect x="875.5" y="8" width="8" height="1.3" fill="#fff"/>
<rect x="1091" y="2.5" width="44" height="13" fill="#fff"/>
<text x="1093" y="12" font-size="8" font-style="italic" fill="#111">搜索</text>
<circle cx="1125" cy="8" r="2.6" fill="none" stroke="#222" stroke-width="1"/><path d="M1127,10 L1129.5,12.5" stroke="#222" stroke-width="1.2"/>
<rect x="1144" y="8.5" width="6" height="1" fill="#fff"/>
</svg>

<!-- 3D model -->
<svg class="a" style="left:0;top:0" width="1152" height="720" viewBox="0 0 1152 720">
<defs>
<linearGradient id="cyl" x1="0" x2="1" y1="0" y2="0">
<stop offset="0" stop-color="#b07050"/><stop offset="0.12" stop-color="#c48464"/><stop offset="0.38" stop-color="#d89878"/><stop offset="0.55" stop-color="#cf8f6f"/><stop offset="0.82" stop-color="#b27252"/><stop offset="1" stop-color="#9a6244"/>
</linearGradient>
<linearGradient id="pock" x1="0" x2="1" y1="0" y2="0">
<stop offset="0" stop-color="#8f5d41"/><stop offset="0.25" stop-color="#b57a5a"/><stop offset="0.6" stop-color="#d49877"/><stop offset="1" stop-color="#dca283"/>
</linearGradient>
<radialGradient id="ball" cx="0.45" cy="0.45" r="0.6">
<stop offset="0" stop-color="#fff58a"/><stop offset="0.5" stop-color="#f8ea10"/><stop offset="1" stop-color="#e8d800"/>
</radialGradient>
</defs>
<g stroke="#3a2417" stroke-width="0.9" stroke-linejoin="round">
<polygon points="559.4,181.7 958.6,218 962.8,287.8 883.3,458.3 484.4,422.5 480.8,352.5" fill="none" stroke="#f4f0ee" stroke-width="2.2"/>
<polygon points="559.4,181.7 958.6,218 880.6,387.8 480.8,352.5" fill="#88583d"/>
<polygon points="480.8,352.5 880.6,387.8 883.3,458.3 484.4,422.5" fill="#d99878"/>
<polygon points="880.6,387.8 958.6,218 962.8,287.8 883.3,458.3" fill="#7e5239"/>
</g>
<!-- cylinder -->
<path d="M575.5,206 L578,276.5 A41.5,21 0 0 0 661,276.5 L658.5,206 Z" fill="url(#cyl)" stroke="#2c1a10" stroke-width="1.1"/>
<ellipse cx="617" cy="206" rx="41.5" ry="21" fill="#88583d" stroke="#2c1a10" stroke-width="1.1"/>
<!-- pocket -->
<defs><clipPath id="pclip"><ellipse cx="819.5" cy="294.1" rx="75.5" ry="38.8"/></clipPath>
<linearGradient id="pock2" x1="0" x2="0" y1="0" y2="1"><stop offset="0" stop-color="#000" stop-opacity="0"/><stop offset="0.6" stop-color="#000" stop-opacity="0.05"/><stop offset="1" stop-color="#000" stop-opacity="0.18"/></linearGradient></defs>
<ellipse cx="819.5" cy="294.1" rx="76" ry="39.2" fill="url(#pock)"/>
<ellipse cx="819.5" cy="294.1" rx="76" ry="39.2" fill="url(#pock2)"/>
<g clip-path="url(#pclip)">

<g fill="none" stroke="#36d2d6">
<ellipse cx="820" cy="304.4" rx="56" ry="26.8" stroke-width="4" stroke-opacity="0.75"/>
<ellipse cx="820" cy="304.4" rx="56" ry="26.8" stroke="#8ae8ea" stroke-width="0.6" stroke-dasharray="1.2,1.2"/>
<path d="M828,299 C845,294 865,293 872,302 C878,312 866,322 848,321 C835,320 828,316 822,311" stroke-width="3" stroke-opacity="0.8"/>
<path d="M776,318 C790,312 800,308 812,306" stroke-width="2.5" stroke-opacity="0.8"/>
</g>
</g>
<path d="M790,329.5 Q815,334 850,328 Q852,331 840,332.5 Q815,334.5 790,331Z" fill="#eefafa" opacity="0.9"/>
<ellipse cx="819.5" cy="294.1" rx="76" ry="39.2" fill="none" stroke="#2e1c12" stroke-width="1"/>
<line x1="712.5" y1="145.4" x2="812.5" y2="154.2" stroke="#888" stroke-width="0.9" stroke-dasharray="7,2,2,3"/>
<line x1="812.5" y1="154.2" x2="820.7" y2="332" stroke="#d82028" stroke-width="0.9"/>
<circle cx="812.2" cy="311.5" r="18.4" fill="#f6e61e"/>
<circle cx="812.2" cy="311.5" r="17" fill="#f8ea2a"/>
<path d="M809,311.6 L816,311.6" stroke="#fff" stroke-width="1.2"/>
<circle cx="813" cy="311.6" r="1.5" fill="#111"/>
<!-- red MODEL csys -->
<g fill="#ea2020" font-family="Liberation Sans" font-weight="bold">
<text x="712.5" y="244" font-size="11">Z</text>
<text x="726.5" y="259.5" font-size="11">Y</text>
<text x="719.5" y="303" font-size="13" textLength="45.5" lengthAdjust="spacingAndGlyphs" font-weight="normal" stroke="#ea2020" stroke-width="0.5">MODEL</text>
<text x="764" y="291" font-size="10" font-weight="normal">X</text>
</g>
<g stroke="#ea2020" fill="none" stroke-width="0.9">
<path d="M716.5,286 L720,253 L727.5,284"/>
<path d="M718,287 L745,289"/>
<ellipse cx="722.5" cy="272" rx="3" ry="5.5"/>
<path d="M720,262 L724,280"/>
</g>
<!-- triad -->
<g>
<polygon points="477.5,604 484.5,604 484,566 477,566" fill="#1d3ed8"/>
<polygon points="472.5,569 486.7,569 479.5,552.5" fill="#1d3ed8"/>
<polygon points="482.5,602 488,603.5 496,585 491,582" fill="#159a18"/>
<path d="M488,583 L491,577 L498,574 L500,580 L497,589 L490,590Z" fill="#159a18"/>
<polygon points="487,605 487.5,612 529,613 529,606.5" fill="#e01a1a"/>
<polygon points="527.5,604.5 544.5,613 527.5,618.5" fill="#e01a1a"/>
<rect x="474" y="602" width="14" height="13" rx="5" fill="#f4ef2c"/>
<text x="470.5" y="545.5" font-size="10" fill="#4d55c8" font-family="Liberation Sans">Z</text>
<text x="493.5" y="573" font-size="10" fill="#48a848" font-family="Liberation Sans">Y</text>
<text x="553.5" y="622" font-size="10" fill="#e03030" font-family="Liberation Sans">X</text>
</g>
</svg>

<!-- status -->
<div class="a" id="status"></div>

<svg class="a" style="left:0;top:700px" width="1152" height="20" font-family="Liberation Sans">
<rect x="920" y="5" width="141" height="15" fill="#f2f3f4"/>
<path d="M926,6 L941,4 L943,19 L928,20Z" fill="#e85a35"/>
<text x="929.5" y="17.5" font-size="13" font-weight="bold" fill="#fff">S</text>
<text x="946" y="16.5" font-size="9" font-weight="bold" fill="#2a68b4">英</text>
<path d="M967.5,9 A4.8,4.8 0 1 1 962,16.5 A4,4 0 0 0 967.5,9Z" fill="#2a68b4"/>
<circle cx="978" cy="11" r="0.9" fill="#2a68b4"/><path d="M981,12 Q983,14 981,16" fill="none" stroke="#2a68b4" stroke-width="1"/>
<rect x="992" y="8" width="4" height="7" rx="2" fill="#2a68b4"/><path d="M990.5,12 Q994,17 997.5,12 M994,15.5 L994,18 M991.5,18.5 L996.5,18.5" fill="none" stroke="#2a68b4" stroke-width="0.9"/>
<rect x="1004" y="9" width="11" height="8" fill="none" stroke="#2a68b4" stroke-width="1.2"/><path d="M1006,11.5 L1013,11.5 M1006,14 L1013,14" stroke="#2a68b4" stroke-width="0.9"/>
<circle cx="1024" cy="10" r="2" fill="#2a68b4"/><path d="M1021,13 L1027,13 L1027,18 L1021,18Z" fill="#2a68b4"/><rect x="1026" y="14" width="7" height="4" fill="#fff" stroke="#2a68b4" stroke-width="0.8"/>
<path d="M1036,10 L1039,8.5 L1042,8.5 L1045,10 L1044,12 L1043,12 L1043,18 L1038,18 L1038,12 L1037,12Z" fill="#2a68b4"/>
<rect x="1049" y="9" width="4" height="9" fill="#2a68b4"/><rect x="1054" y="9" width="4" height="9" fill="#2a68b4"/><rect x="1053" y="13" width="1" height="1" fill="#fff"/>
<rect x="1061.5" y="5.5" width="56" height="15" fill="#eeeeee" stroke="#a8a8a8" stroke-width="0.8"/>
<rect x="1120.5" y="5.5" width="21" height="15" fill="#eeeeee" stroke="#b0b0b0" stroke-width="0.8"/>
<text x="1122" y="16" font-size="8" fill="#999">CAP</text>
<rect x="1143.5" y="5.5" width="12" height="15" fill="#eeeeee" stroke="#b0b0b0" stroke-width="0.8"/>
<text x="1145" y="16" font-size="8" fill="#222" font-weight="bold">NU</text>
</svg>

</body></html>
